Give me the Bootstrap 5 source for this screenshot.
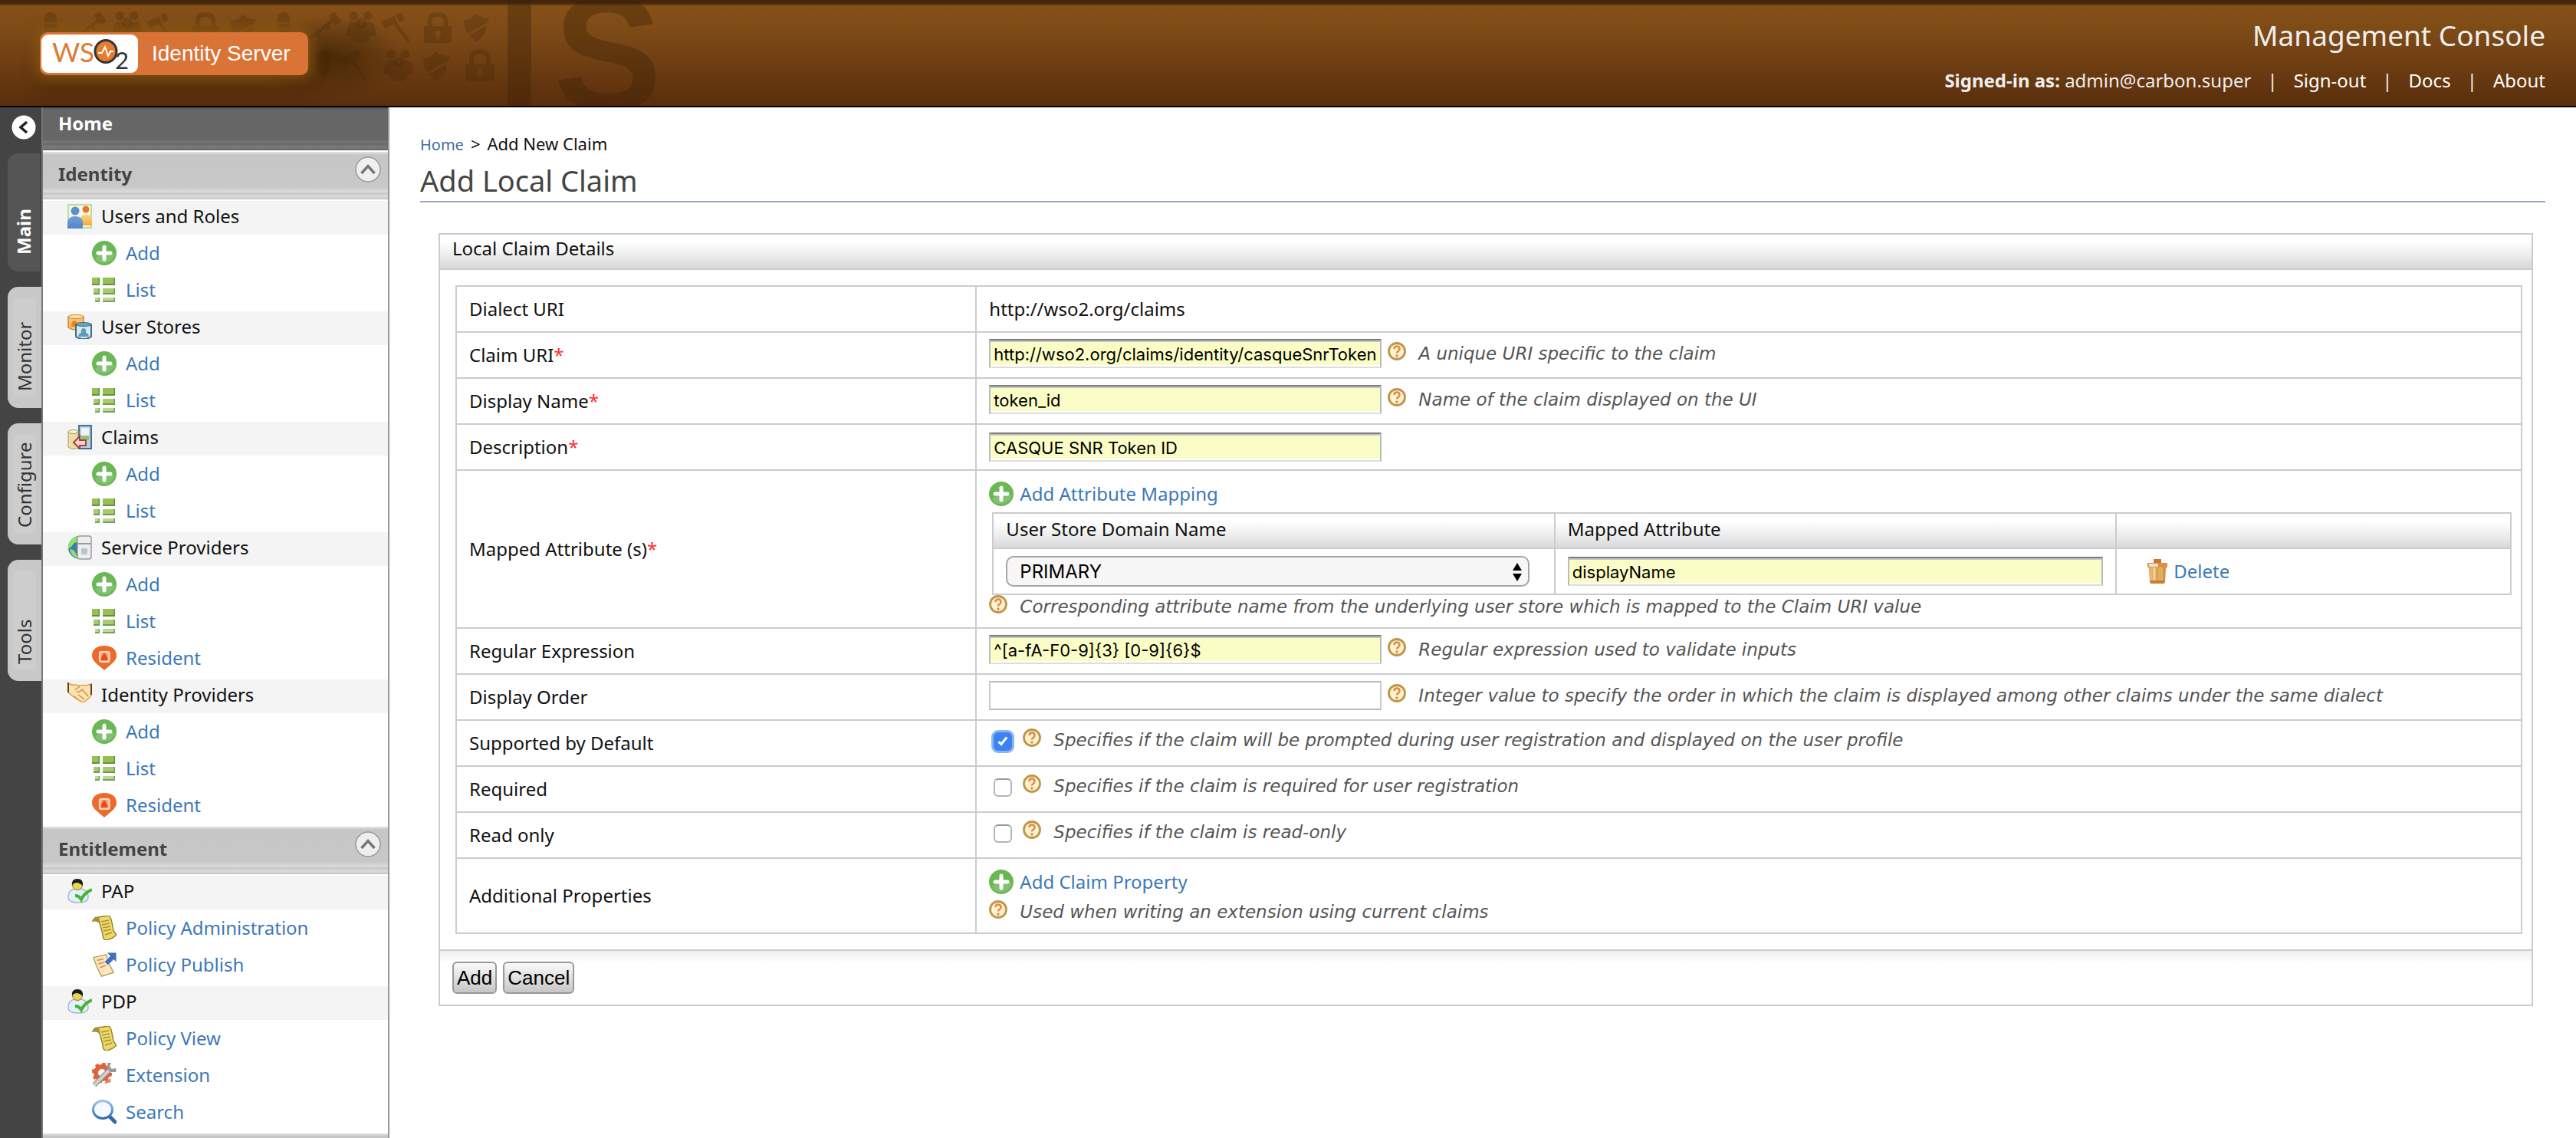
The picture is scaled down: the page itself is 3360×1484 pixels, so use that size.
<!DOCTYPE html>
<html lang="en">
<head>
<meta charset="utf-8">
<meta name="viewport" content="width=device-width, initial-scale=1">
<title>WSO2 Identity Server - Management Console</title>
<link href="https://cdn.jsdelivr.net/npm/bootstrap@5.3.0/dist/css/bootstrap.min.css" rel="stylesheet">
<style>
:root{--line:#ccc;--lnk:#3c78b9}
body{font-family:"Noto Sans","Open Sans",sans-serif;font-size:24px;line-height:32px;color:#111;background:#fff}
a{color:var(--lnk);text-decoration:none}
a:hover{text-decoration:underline}
svg{display:block;flex:none}
.ic{width:32px;height:32px}
.ic-help{width:24px;height:24px}

/* top banner */
.banner{height:140px;border-bottom:2px solid #000;background:linear-gradient(#43260c 0,#43260c 4px,#865118 8px,#7a4816 50px,#5a2e0c 138px);overflow:hidden}
.banner-art{top:0;left:0}
.brand{margin:42px 0 0 52px;width:350px;height:56px;border-radius:10px;background:#da7336;box-shadow:0 0 16px 6px rgba(140,90,20,.75),0 22px 22px 2px rgba(50,30,0,.3);color:#fff}
.brand-mark{margin:3px 2px;width:126px;height:50px;border-radius:9px;background:#fff}
.brand-name{font-family:"Liberation Sans Narrow","Liberation Sans",sans-serif;font-size:28px;line-height:56px;margin-left:16px;white-space:nowrap}
.account{padding:19px 40px 0 0;color:#eee}
.account a{color:#fff}
.console-name{font-size:37px;line-height:54px}
.account-nav{line-height:32px;margin-top:16px}
.account-nav li+li::before{content:"|";padding:0 21px;color:#eee}

/* left rail */
.rail{width:56px;background:#444;border-right:2px solid #777;padding-top:10px}
.rail-toggle{width:32px;height:32px;margin-left:15px;margin-bottom:18px;padding:0;border:0;background:none}
.rail-tab{margin:0 0 20px 10px;height:158px;padding:22px 0;width:44px;writing-mode:vertical-rl;transform:rotate(180deg);border:0;border-radius:0 14px 14px 0;background:linear-gradient(#cdcdcd,#cdcdcd) center/30px 128px no-repeat #c8c8c8;color:#333;text-align:left;line-height:40px;display:block}
.rail-tab.active{background:#555;color:#fff;font-weight:700;height:154px;width:42px}
.side{width:452px;border-right:2px solid #999}
.side-home{height:56px;margin-bottom:2px;padding:8px 20px 0;line-height:26px;color:#fff;font-weight:700;background:linear-gradient(#4c4c4c 0,#666 3px,#666 42px,#777 45px,#666 48px,#777 50px,#777 54px,#555 56px)}
.side-bar{height:62px;padding:13px 8px 0 20px;color:#444;font-weight:700;background:linear-gradient(#e4e4e4 0,#c6c6c6 4px,#c8c8c8 46px,#dcdcdc 52px,#c6c6c6 54px,#dcdcdc 58px,#c2c2c2 62px);margin-bottom:2px}
.side-bar button{width:36px;height:36px;padding:0;border:0;background:none;margin-top:-8px}
.side-head{height:44px;padding:4px 0 8px 32px;background:#f4f4f4;gap:12px}
.side-list{padding:0 0 4px;margin:0;list-style:none}
.side-list li{padding:8px 0 8px 64px}
.side-list a{display:flex;gap:12px}
.side-next{background:linear-gradient(#e4e4e4 0,#c6c6c6 4px);flex:1 1 6px}

/* content */
.content{padding:32px 40px 0}
.crumbs{font-size:22px;line-height:30px;height:30px;gap:9px}
.crumbs a{font-size:20px;color:#456a9e}
.page-title{font-size:38px;line-height:46px;color:#444;margin:0 0 40px;padding:10px 0 4px;border-bottom:2px solid #97a6c9;font-weight:400}
.panel{margin:0 16px 0 24px;border:2px solid var(--line)}
.panel-head{height:46px;padding:2px 16px;border-bottom:2px solid var(--line)}
.grad{background:linear-gradient(#fff 20%,#eff0f0 55%,#dcdcde 90%)}
.panel-body{padding:20px 12px 20px 20px}
.panel-foot{border-top:2px solid var(--line);padding:14px 16px;background:linear-gradient(#eee,#fff 16px)}
.grid-tbl{width:100%;table-layout:fixed;border-collapse:separate;border-spacing:0;border:solid var(--line);border-width:2px 0 0 2px}
.grid-tbl th,.grid-tbl td{border:solid var(--line);border-width:0 2px 2px 0;padding:0 16px;font-weight:400;text-align:left}
.form-tbl>tbody>tr{height:60px}
.form-tbl>tbody>tr>td{vertical-align:top;padding-top:8px}
.form-tbl>tbody>tr>td.mid{vertical-align:middle;padding-top:0}
.form-tbl>tbody>tr>td.chk{padding-top:10px}
.form-tbl>tbody>tr>td.multi{padding-top:14px;padding-bottom:12px}
.req{color:#f33}
.txt{border:2px solid;border-color:#7c7c7c #bbb #ddd;border-radius:0;box-shadow:inset 0 2px #c4c4c4,inset 0 -2px #fff;background:#fafdc5;color:#000;font:22px Inter,"Liberation Sans",sans-serif;height:38px;width:512px;padding:2px 4px 0;display:block}
.txt.plain{background:#fff;border-color:#bbb #ccc #bbb;box-shadow:none}
.help{gap:16px;font-family:"DejaVu Sans","Noto Sans",sans-serif;font-size:23px;line-height:30px;font-style:italic;color:#555}
.txt+.help{padding-top:4px;margin-left:8px}
.tick{appearance:none;width:24px;height:24px;margin:5px 14px 0 6px;border:2px solid #b5b5b5;border-top-color:#999;border-radius:6px;background:#fff}
.tick:checked{background:#3b82f5;border-color:#3b82f5;box-shadow:0 0 0 3px #8fb3ee;position:relative}
.tick:checked::after{content:"";position:absolute;left:7px;top:2px;width:6px;height:13px;border:solid #fff;border-width:0 3px 3px 0;transform:rotate(40deg)}
.map-tbl{margin:8px 0 0 4px}
.map-tbl thead th{height:46px;padding-bottom:4px}
.map-tbl tbody td{height:60px}
.domain{appearance:none;width:100%;height:40px;border:2px solid #a6a6a6;border-radius:10px;background:#f7f7f7;color:#000;font:24px Inter,"Liberation Sans",sans-serif;padding:0 16px}
.domain-arrows{top:9px;right:10px;pointer-events:none}
.push{height:42px;padding:0 4px;border:2px solid #999;border-radius:6px;background:linear-gradient(#fafafa,#c6c6c6);color:#000;font:26px "Liberation Sans",Arial,sans-serif}
</style>
<script src="https://cdn.jsdelivr.net/npm/bootstrap@5.3.0/dist/js/bootstrap.bundle.min.js"></script>
</head>
<body class="d-flex flex-column min-vh-100">
<svg width="0" height="0" class="position-absolute" aria-hidden="true">
<defs>
<linearGradient id="gBlue" x2="0" y2="1"><stop stop-color="#6f9fd8"/><stop offset="1" stop-color="#5585cb"/></linearGradient>
<linearGradient id="gGold" x2="0" y2="1"><stop stop-color="#fbd48a"/><stop offset="1" stop-color="#f2ac3c"/></linearGradient>
<linearGradient id="gTrash"><stop stop-color="#e3974a"/><stop offset=".3" stop-color="#f5dca0"/><stop offset=".5" stop-color="#d9a24e"/><stop offset=".7" stop-color="#e8c070"/><stop offset="1" stop-color="#cf8438"/></linearGradient>
<linearGradient id="gLens" x2="0" y2="1"><stop stop-color="#9cc3ea"/><stop offset="1" stop-color="#2f6ab3"/></linearGradient>
<symbol id="i-add" viewBox="0 0 32 32"><circle cx="16" cy="16" r="16" fill="#6bb755"/><path d="M4 22Q16 14 30 18A15 15 0 0 1 6 26z" fill="#8cc47a" opacity=".7"/><path d="M16 8v16M8 16h16" stroke="#fff" stroke-width="5" stroke-linecap="round"/></symbol>
<symbol id="i-list" viewBox="0 0 32 32"><path d="M0 0h10v10H0zM14 0h16v10H14z" fill="#5d9148"/><path d="M0 0h8.500v8H0zM14 0h14.500v8H14z" fill="#97c14f"/><path d="M2 14h8v8H2zM14 14h16v8H14z" fill="#6b9c50"/><path d="M2 14h6.500v6H2zM14 14h14.500v6H14z" fill="#a8cc6c"/><path d="M4 26h6v6H4zM14 26h16v6H14z" fill="#74a25c"/><path d="M4 26h4.500v4H4zM14 26h14.500v4H14z" fill="#bfd896"/></symbol>
<symbol id="i-users" viewBox="0 0 32 32"><path d="M1 1h30v30H1z" fill="#f3f8ea" stroke="#bfdc94" stroke-width="2"/><circle cx="24" cy="7" r="4.500" fill="#e8772e"/><path d="M17 28V19q0-5 7-5t8 4v10z" fill="url(#gGold)"/><circle cx="10" cy="9" r="5.500" fill="#5a8fd0"/><path d="M0 32V24q1-8 10-8t10 8v8z" fill="url(#gBlue)"/></symbol>
<symbol id="i-stores" viewBox="0 0 32 32"><path d="M1 3v14q4 3 9 3h11V3z" fill="#f6c36a" stroke="#c98a2c" stroke-width="1.500"/><ellipse cx="11" cy="3" rx="10" ry="2.500" fill="#fbe3b0" stroke="#c98a2c"/><path d="M5 16q0-8 4-8t5 8z" fill="#ef7f2d"/><path d="M11 13v16q4 3 10 3t10-3V13z" fill="#dbe9ef" stroke="#33708c" stroke-width="2"/><ellipse cx="21" cy="13" rx="10" ry="2.500" fill="#6aa3ba" stroke="#33708c"/><path d="M14 29q1-5 4-5-1-6 3-6t3 6q3 0 4 5z" fill="#5d9cb8"/></symbol>
<symbol id="i-claims" viewBox="0 0 32 32"><path d="M15 1h16v30H15z" fill="#b8d2e4" stroke="#44708f" stroke-width="2"/><path d="M18 4h10v14H18z" fill="#eef4f8"/><path d="M18 14h10v6H18z" fill="#9cc16c"/><path d="M1 9v20q6 4 13 1V9z" fill="#ecdca6" stroke="#b09a5c"/><ellipse cx="7.500" cy="9" rx="6.500" ry="2.500" fill="#f7efcf" stroke="#b09a5c"/><path d="M8 23l8-8v5h8v7h-8v4z" fill="#f6d9d0" stroke="#a93f3a" stroke-width="2"/></symbol>
<symbol id="i-service" viewBox="0 0 32 32"><path d="M16 1A15 15 0 0 0 16 31z" fill="#3f7ba9"/><path d="M2 10Q6 2 13 2v7Q8 9 6 14l-6 5zM3 18q6 0 8 6l2 6Q4 27 3 18z" fill="#8fe06c"/><rect x="13" y="1" width="18" height="30" rx="3" fill="#eee" stroke="#9a9a9a" stroke-width="1.500"/><path d="M14 11h16" stroke="#999" stroke-width="2"/><path d="M18 17h8v8h-8z" fill="#b9c4cc"/></symbol>
<symbol id="i-shake" viewBox="0 0 32 32"><path d="M1 1q5 3 10 2l4 1q6-1 9 0l7-2v15l-5 5q-4 4-8 3L7 18 1 13z" fill="#fbe3b2" stroke="#dba24a" stroke-width="1.500"/><path d="M10 10l6-5M12 12q5 1 7-3l8 9M14 16l8 6M9 18l4 4" fill="none" stroke="#d58f37" stroke-width="1.500"/><path d="M1 0v13M31 2v14" stroke="#6b3a14" stroke-width="2"/></symbol>
<symbol id="i-pap" viewBox="0 0 32 32"><path d="M1 24q0-10 9-11h8q9 2 9 11 0 7-13 7T1 24z" fill="#e6eef8" stroke="#a9b8cf" stroke-width="1.500"/><circle cx="13" cy="8" r="6.500" fill="#e9d94e" stroke="#7d7433"/><path d="M6 8q-1-8 7-8t7 9q-5-4-8-4t-6 3z" fill="#1d1d1d"/><path d="M10 22q5 0 8 5 4-9 14-13" fill="none" stroke="#45b535" stroke-width="4"/></symbol>
<symbol id="i-scroll" viewBox="0 0 32 32"><path d="M1 7Q3 2 8 2l14-2q3 3 4 9l2 11q2 3 4 5-6 6-14 7-4-1-4-8L10 10Q8 6 1 7z" fill="#f0da66" stroke="#97812f" stroke-width="1.500"/><path d="M1 7Q3 2 8 2q3 3 2 8Q8 6 1 7z" fill="#a8903c"/><path d="M12 8l10-2M13 12l10-2M14 16l10-2M15 20l10-2M17 25l9-3" stroke="#a8923c" stroke-width="1.500"/></symbol>
<symbol id="i-publish" viewBox="0 0 34 34"><path d="M2 7l18-4 2 9 8 16-17 5Q6 20 2 7z" fill="#fbe6bd" stroke="#b89a60" stroke-width="1.500"/><path d="M7 11l9-2M9 16l10-3M11 21l8-3" stroke="#e0884c" stroke-width="1.800"/><path d="M20 0h14v14l-4-4-8 8-5-5 8-8z" fill="#3e72b8" stroke="#fff"/></symbol>
<symbol id="i-gear" viewBox="0 0 32 32"><circle cx="13" cy="13" r="8" fill="none" stroke="#df6238" stroke-width="6"/><circle cx="13" cy="13" r="11.500" fill="none" stroke="#df6238" stroke-width="3.500" stroke-dasharray="4.500 4.500"/><path d="M16 26l8-6 1 5-7 2z" fill="#e08a68"/><path d="M3 29L23 9" stroke="#8b8b8b" stroke-width="6.500"/><path d="M3 29L23 9" stroke="#d0d0d0" stroke-width="4"/><path d="M20 0v8l4 4h7q2-5-1-5l-4 1-3-3 2-5z" fill="#999"/></symbol>
<symbol id="i-search" viewBox="0 0 32 32"><path d="M22 21l8 8" stroke="#3269ad" stroke-width="5" stroke-linecap="round"/><ellipse cx="14" cy="13" rx="12.500" ry="11.500" fill="#f6fafe" stroke="url(#gLens)" stroke-width="3"/></symbol>
<symbol id="i-resident" viewBox="0 0 32 32"><path d="M16 0C26 0 32 5 32 13c0 6-5 10-16 19C5 23 0 19 0 13 0 5 6 0 16 0z" fill="#ed6a2c"/><rect x="10" y="8" width="12.500" height="13" rx="2" fill="#f4a27c" stroke="#fbd9c6" stroke-width="2.200"/><path d="M11.500 19q0-4 4.500-10 4.500 6 4.500 10z" fill="#ed4a1c"/></symbol>
<symbol id="i-trash" viewBox="0 0 26 32"><path d="M8 0h10v6H8z" fill="#c9762a"/><path d="M0 5h26v6H0z" fill="#dc8f48"/><path d="M2 6h12v4H2z" fill="#f6dfc4"/><path d="M2 11h22l-1 19q-1 2-3 2H6q-2 0-3-2z" fill="url(#gTrash)"/><path d="M7 12v17M12 12v17M17 12v17M21 12v17" stroke="#b9782f" stroke-opacity=".5"/><path d="M3 28h20l-1 4H4z" fill="#cd7c34"/></symbol>
<symbol id="i-help" viewBox="0 0 24 24"><circle cx="12" cy="12" r="10.500" fill="#fdf3cf" stroke="#bf964a" stroke-width="2.800"/><path d="M8.500 9q0-3.500 3.500-3.500T15.500 9q0 2-2 3.200Q12 13 12 14.500" fill="none" stroke="#e08a4c" stroke-width="2.600"/><circle cx="12" cy="18" r="1.700" fill="#e08a4c"/></symbol>
<symbol id="i-up" viewBox="0 0 36 36"><circle cx="18" cy="18" r="16" fill="#efefef" stroke="#999" stroke-width="1.500"/><path d="M9.500 23L18 13.500 26.500 23" fill="none" stroke="#777" stroke-width="3.500"/></symbol>
<symbol id="b-helm" viewBox="0 0 40 44"><path d="M11 17Q10 2 20 2t9 15z"/><path d="M11 19h18v6H11zM12 27h16q-1 11-8 13-7-2-8-13z"/></symbol>
<symbol id="b-key" viewBox="0 0 50 44"><path d="M2 38L34 12l-3-6 8-5 9 14-7 5-4-4-6 5 2 4-4 2-2-4-8 8 2 4-4 3-3-4-7 5z"/></symbol>
<symbol id="b-ppl" viewBox="0 0 44 44"><circle cx="12" cy="7" r="6"/><circle cx="31" cy="7" r="6"/><circle cx="22" cy="17" r="7"/><path d="M2 34q0-19 9-19t11 8q2-8 11-8t9 19l-7 1q-1 9-13 9T9 35z"/></symbol>
<symbol id="b-gavel" viewBox="0 0 44 44"><path d="M0 14L18 6l4 8L6 24zM20 4l7-3 5 10-7 4zM17 17l4-3 19 26-4 3z"/></symbol>
<symbol id="b-lock" viewBox="0 0 40 44"><path d="M6 20v-7Q6 1 20 1t14 12v7h-6v-6q0-7-8-7t-8 7v6z"/><path fill-rule="evenodd" d="M1 20h38v19q0 4-4 4H5q-4 0-4-4zM20 26a4 4 0 0 0-2 7.500V38h4v-4.500A4 4 0 0 0 20 26z"/></symbol>
<symbol id="b-shield" viewBox="0 0 40 44"><path d="M1 12Q12 11 18 2q8 7 20 7l-4 7L7 30Q1 22 1 12zM9 33l25-14q-2 17-14 23-7-3-11-9z"/></symbol>
</defs>
</svg>

<header class="banner d-flex justify-content-between position-relative">
  <svg class="banner-art position-absolute" width="900" height="138" fill="#3c2204" fill-opacity=".26" aria-hidden="true">
    <defs><radialGradient id="gDark"><stop stop-color="#2e1a00" stop-opacity=".6"/><stop offset="1" stop-color="#2e1a00" stop-opacity="0"/></radialGradient></defs>
    <ellipse cx="430" cy="75" rx="100" ry="55" fill="url(#gDark)" fill-opacity="1"/>
    <use href="#b-helm" x="46" y="14" width="40" height="40"/><use href="#b-key" x="92" y="14" width="50" height="42"/><use href="#b-ppl" x="144" y="14" width="44" height="42"/><use href="#b-gavel" x="190" y="16" width="42" height="40"/><use href="#b-lock" x="248" y="15" width="40" height="42"/><use href="#b-shield" x="298" y="17" width="40" height="40"/>
    <use href="#b-helm" x="350" y="14" width="40" height="40"/><use href="#b-key" x="398" y="14" width="50" height="42"/><use href="#b-ppl" x="449" y="14" width="44" height="42"/><use href="#b-gavel" x="496" y="15" width="44" height="42"/><use href="#b-lock" x="551" y="15" width="40" height="42"/><use href="#b-shield" x="602" y="16" width="40" height="40"/>
    <use href="#b-helm" x="402" y="64" width="40" height="40"/><use href="#b-gavel" x="440" y="64" width="44" height="42"/><use href="#b-ppl" x="498" y="64" width="44" height="42"/><use href="#b-shield" x="550" y="65" width="40" height="42"/><use href="#b-lock" x="605" y="63" width="42" height="44"/>
    <text x="648 722" y="143" font-family="Liberation Sans, Arial, sans-serif" font-weight="700" font-size="212" fill-opacity=".38">IS</text>
  </svg>
  <a href="#" class="brand d-flex position-relative text-decoration-none">
    <span class="brand-mark">
      <svg width="126" height="50" viewBox="0 0 126 50" aria-label="WSO2" role="img">
        <text x="14" y="36" font-family="Lato, sans-serif" font-weight="400" font-size="35" fill="#e07b32">WS</text>
        <ellipse cx="84" cy="22" rx="14" ry="14.500" fill="#e87b2e" stroke="#333" stroke-width="3"/>
        <path d="M74 24h5l4-8 4 12 3-6h4" fill="none" stroke="#fff" stroke-width="2"/>
        <text x="96" y="45" font-family="Lato, sans-serif" font-size="31" fill="#333">2</text>
      </svg>
    </span>
    <span class="brand-name">Identity Server</span>
  </a>
  <div class="account position-relative text-end">
    <div class="console-name">Management Console</div>
    <ul class="account-nav list-unstyled d-flex justify-content-end mb-0">
      <li><strong>Signed-in as:</strong> admin@carbon.super</li><li><a href="#">Sign-out</a></li><li><a href="#">Docs</a></li><li><a href="#">About</a></li>
    </ul>
  </div>
</header>

<div class="d-flex flex-grow-1">
  <div class="rail flex-shrink-0">
    <button class="rail-toggle" aria-label="Collapse menu"><svg class="ic" viewBox="0 0 32 32"><circle cx="16" cy="16" r="15.500" fill="#fff"/><path d="M20 9l-8 7 8 7" fill="none" stroke="#222" stroke-width="3.500"/></svg></button>
    <button class="rail-tab active">Main</button>
    <button class="rail-tab">Monitor</button>
    <button class="rail-tab">Configure</button>
    <button class="rail-tab">Tools</button>
  </div>

  <nav class="side flex-shrink-0 d-flex flex-column">
    <div class="side-home">Home</div>
    <div class="side-bar d-flex justify-content-between">Identity<button aria-label="Collapse Identity"><svg width="36" height="36"><use href="#i-up"/></svg></button></div>
    <div class="side-head d-flex"><svg class="ic"><use href="#i-users"/></svg>Users and Roles</div>
    <ul class="side-list">
      <li><a href="#"><svg class="ic"><use href="#i-add"/></svg>Add</a></li>
      <li><a href="#"><svg class="ic"><use href="#i-list"/></svg>List</a></li>
    </ul>
    <div class="side-head d-flex"><svg class="ic"><use href="#i-stores"/></svg>User Stores</div>
    <ul class="side-list">
      <li><a href="#"><svg class="ic"><use href="#i-add"/></svg>Add</a></li>
      <li><a href="#"><svg class="ic"><use href="#i-list"/></svg>List</a></li>
    </ul>
    <div class="side-head d-flex"><svg class="ic"><use href="#i-claims"/></svg>Claims</div>
    <ul class="side-list">
      <li><a href="#"><svg class="ic"><use href="#i-add"/></svg>Add</a></li>
      <li><a href="#"><svg class="ic"><use href="#i-list"/></svg>List</a></li>
    </ul>
    <div class="side-head d-flex"><svg class="ic"><use href="#i-service"/></svg>Service Providers</div>
    <ul class="side-list">
      <li><a href="#"><svg class="ic"><use href="#i-add"/></svg>Add</a></li>
      <li><a href="#"><svg class="ic"><use href="#i-list"/></svg>List</a></li>
      <li><a href="#"><svg class="ic"><use href="#i-resident"/></svg>Resident</a></li>
    </ul>
    <div class="side-head d-flex"><svg class="ic"><use href="#i-shake"/></svg>Identity Providers</div>
    <ul class="side-list">
      <li><a href="#"><svg class="ic"><use href="#i-add"/></svg>Add</a></li>
      <li><a href="#"><svg class="ic"><use href="#i-list"/></svg>List</a></li>
      <li><a href="#"><svg class="ic"><use href="#i-resident"/></svg>Resident</a></li>
    </ul>
    <div class="side-bar d-flex justify-content-between">Entitlement<button aria-label="Collapse Entitlement"><svg width="36" height="36"><use href="#i-up"/></svg></button></div>
    <div class="side-head d-flex"><svg class="ic"><use href="#i-pap"/></svg>PAP</div>
    <ul class="side-list">
      <li><a href="#"><svg class="ic"><use href="#i-scroll"/></svg>Policy Administration</a></li>
      <li><a href="#"><svg class="ic"><use href="#i-publish"/></svg>Policy Publish</a></li>
    </ul>
    <div class="side-head d-flex"><svg class="ic"><use href="#i-pap"/></svg>PDP</div>
    <ul class="side-list">
      <li><a href="#"><svg class="ic"><use href="#i-scroll"/></svg>Policy View</a></li>
      <li><a href="#"><svg class="ic"><use href="#i-gear"/></svg>Extension</a></li>
      <li><a href="#"><svg class="ic"><use href="#i-search"/></svg>Search</a></li>
    </ul>
    <div class="side-next"></div>
  </nav>

  <main class="content flex-grow-1">
    <div class="crumbs d-flex align-items-baseline"><a href="#">Home</a><span>&gt;</span><span>Add New Claim</span></div>
    <h1 class="page-title">Add Local Claim</h1>
    <form class="panel" onsubmit="return false">
      <div class="panel-head grad">Local Claim Details</div>
      <div class="panel-body">
        <table class="grid-tbl form-tbl">
          <colgroup><col style="width:25.18%"><col></colgroup>
          <tbody>
          <tr><th>Dialect URI</th><td class="mid">http://wso2.org/claims</td></tr>
          <tr><th><label for="uri">Claim URI<span class="req">*</span></label></th><td><div class="d-flex"><input id="uri" class="txt" type="text" value="http://wso2.org/claims/identity/casqueSnrToken"><div class="help d-flex"><svg class="ic-help"><use href="#i-help"/></svg>A unique URI specific to the claim</div></div></td></tr>
          <tr><th><label for="dname">Display Name<span class="req">*</span></label></th><td><div class="d-flex"><input id="dname" class="txt" type="text" value="token_id"><div class="help d-flex"><svg class="ic-help"><use href="#i-help"/></svg>Name of the claim displayed on the UI</div></div></td></tr>
          <tr><th><label for="desc">Description<span class="req">*</span></label></th><td class="mid"><input id="desc" class="txt" type="text" value="CASQUE SNR Token ID"></td></tr>
          <tr><th>Mapped Attribute (s)<span class="req">*</span></th><td class="multi">
            <a href="#" class="d-inline-flex gap-2 align-top"><svg class="ic"><use href="#i-add"/></svg>Add Attribute Mapping</a>
            <table class="grid-tbl map-tbl">
              <colgroup><col style="width:37%"><col style="width:37%"><col></colgroup>
              <thead><tr class="grad"><th>User Store Domain Name</th><th>Mapped Attribute</th><th></th></tr></thead>
              <tbody><tr>
                <td><div class="position-relative me-3"><select class="domain" aria-label="User Store Domain Name"><option>PRIMARY</option></select><svg class="domain-arrows position-absolute" width="12" height="24" viewBox="0 0 12 24"><path d="M0 10L6 0l6 10zM0 14h12L6 24z"/></svg></div></td>
                <td><input class="txt w-100" type="text" aria-label="Mapped Attribute" value="displayName"></td>
                <td><a href="#" class="d-inline-flex align-top ps-4"><svg class="me-2" width="26" height="32"><use href="#i-trash"/></svg>Delete</a></td>
              </tr></tbody>
            </table>
            <div class="help d-flex"><svg class="ic-help"><use href="#i-help"/></svg>Corresponding attribute name from the underlying user store which is mapped to the Claim URI value</div>
          </td></tr>
          <tr><th><label for="regex">Regular Expression</label></th><td><div class="d-flex"><input id="regex" class="txt" type="text" value="^[a-fA-F0-9]{3} [0-9]{6}$"><div class="help d-flex"><svg class="ic-help"><use href="#i-help"/></svg>Regular expression used to validate inputs</div></div></td></tr>
          <tr><th><label for="order">Display Order</label></th><td><div class="d-flex"><input id="order" class="txt plain" type="text"><div class="help d-flex"><svg class="ic-help"><use href="#i-help"/></svg>Integer value to specify the order in which the claim is displayed among other claims under the same dialect</div></div></td></tr>
          <tr><th><label for="supp">Supported by Default</label></th><td class="chk"><div class="d-flex"><input id="supp" class="tick" type="checkbox" checked><div class="help d-flex"><svg class="ic-help"><use href="#i-help"/></svg>Specifies if the claim will be prompted during user registration and displayed on the user profile</div></div></td></tr>
          <tr><th><label for="requ">Required</label></th><td class="chk"><div class="d-flex"><input id="requ" class="tick" type="checkbox"><div class="help d-flex"><svg class="ic-help"><use href="#i-help"/></svg>Specifies if the claim is required for user registration</div></div></td></tr>
          <tr><th><label for="ro">Read only</label></th><td class="chk"><div class="d-flex"><input id="ro" class="tick" type="checkbox"><div class="help d-flex"><svg class="ic-help"><use href="#i-help"/></svg>Specifies if the claim is read-only</div></div></td></tr>
          <tr><th>Additional Properties</th><td class="multi">
            <a href="#" class="d-inline-flex gap-2 align-top mb-2"><svg class="ic"><use href="#i-add"/></svg>Add Claim Property</a>
            <div class="help d-flex"><svg class="ic-help"><use href="#i-help"/></svg>Used when writing an extension using current claims</div>
          </td></tr>
          </tbody>
        </table>
      </div>
      <div class="panel-foot d-flex gap-2"><button class="push" type="submit">Add</button><button class="push" type="button">Cancel</button></div>
    </form>
  </main>
</div>
</body>
</html>
